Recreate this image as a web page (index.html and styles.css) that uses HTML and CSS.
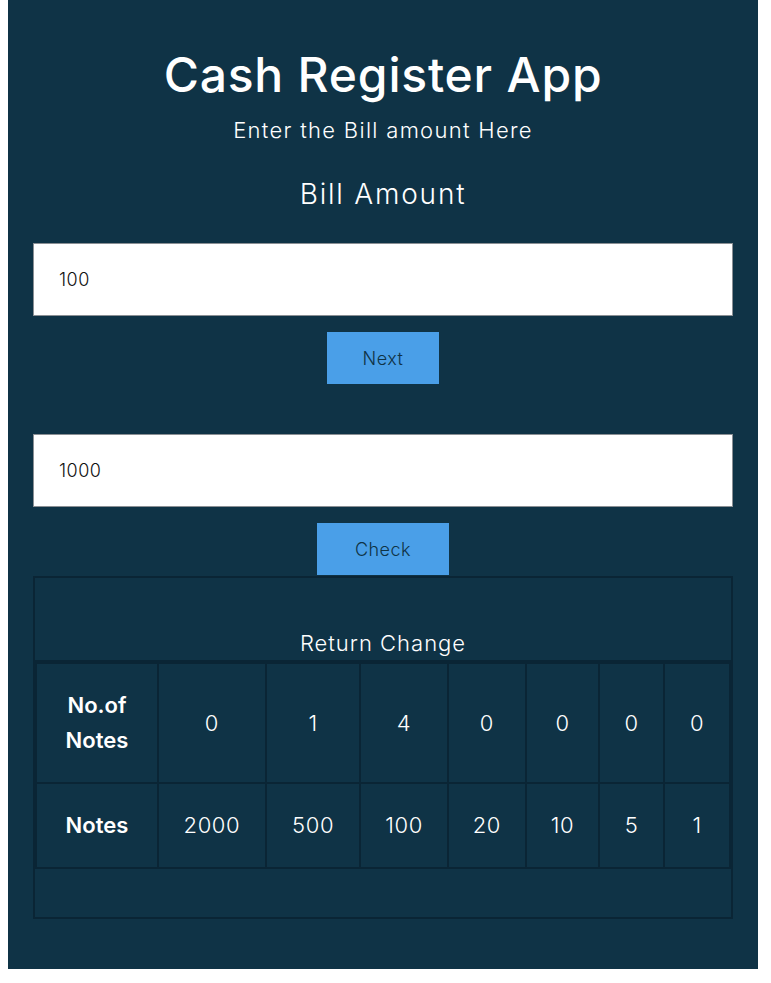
FILE: index.html
```html
<!DOCTYPE html>
<html>
<head>
<meta charset="utf-8">
<title>Cash Register App</title>
<link rel="stylesheet" href="styles.css">
</head>
<body>
<main class="app">
  <h1 class="title">Cash Register App</h1>
  <p class="subtitle">Enter the Bill amount Here</p>
  <label class="label" for="bill">Bill Amount</label>
  <input class="field" id="bill" type="text" value="100">
  <button class="btn btn-next">Next</button>
  <input class="field field-cash" type="text" value="1000">
  <button class="btn btn-check">Check</button>
  <section class="output">
    <table class="change">
      <caption class="caption">Return Change</caption>
      <tr>
        <th class="c0">No.of Notes</th>
        <td class="c1">0</td><td class="c2">1</td><td class="c3">4</td><td class="c4">0</td><td class="c5">0</td><td class="c6">0</td><td class="c7">0</td>
      </tr>
      <tr>
        <th>Notes</th>
        <td>2000</td><td>500</td><td>100</td><td>20</td><td>10</td><td>5</td><td>1</td>
      </tr>
    </table>
  </section>
</main>
</body>
</html>
```
FILE: styles.css
```css
html, body {
  margin: 0;
  padding: 0;
  background: #ffffff;
}
body {
  padding: 0 8px;
  font-family: "Inter", "Noto Sans", sans-serif;
}
.app {
  width: 750px;
  background: #0f3346;
  color: #ffffff;
  display: flex;
  flex-direction: column;
  align-items: center;
  padding: 47px 25px 50px;
  box-sizing: border-box;
}
.title {
  margin: 0;
  font-size: 48px;
  line-height: 56px;
  font-weight: 500;
  letter-spacing: 0.8px;
}
.subtitle {
  margin: 12px 0 0;
  font-size: 22px;
  line-height: 30px;
  font-weight: 300;
  letter-spacing: 1.3px;
}
.label {
  margin-top: 31px;
  font-size: 28px;
  line-height: 36px;
  font-weight: 300;
  letter-spacing: 1.8px;
}
.field {
  margin-top: 31px;
  width: 700px;
  height: 73px;
  box-sizing: border-box;
  border: 1px solid #8a8f94;
  padding: 0 25px;
  font-family: inherit;
  font-size: 18px;
  font-weight: 300;
  letter-spacing: 0.5px;
  color: #111;
  background: #fff;
  outline: none;
}
.field-cash {
  margin-top: 50px;
}
.btn {
  margin-top: 16px;
  height: 52px;
  border: none;
  background: #4a9fe8;
  color: #0f3346;
  font-family: inherit;
  font-size: 18px;
  font-weight: 300;
  letter-spacing: 0.5px;
  padding: 0;
}
.btn-next { width: 112px; }
.btn-check { width: 132px; }
.output {
  margin-top: 1px;
  width: 700px;
  height: 343px;
  box-sizing: border-box;
  border: 2px solid #0a2535;
  padding-top: 50px;
}
.change {
  width: 100%;
  border-collapse: collapse;
  color: #fff;
  font-size: 22px;
  line-height: 35px;
  font-weight: 300;
  letter-spacing: 0.6px;
}
.caption {
  padding-bottom: 2px;
  border-bottom: 2px solid #0a2535;
  font-size: 22px;
  line-height: 30px;
  font-weight: 300;
  letter-spacing: 1px;
}
.change th, .change td {
  border: 2px solid #0a2535;
  padding: 24px 4px;
  text-align: center;
}
.change th { font-weight: 600; letter-spacing: 0; }
.c0 { width: 124px; }
.c1 { width: 108px; }
.c2 { width: 95px; }
.c3 { width: 87px; }
.c4 { width: 78px; }
.c5 { width: 73px; }
.c6 { width: 65px; }
.c7 { width: 66px; }
```
